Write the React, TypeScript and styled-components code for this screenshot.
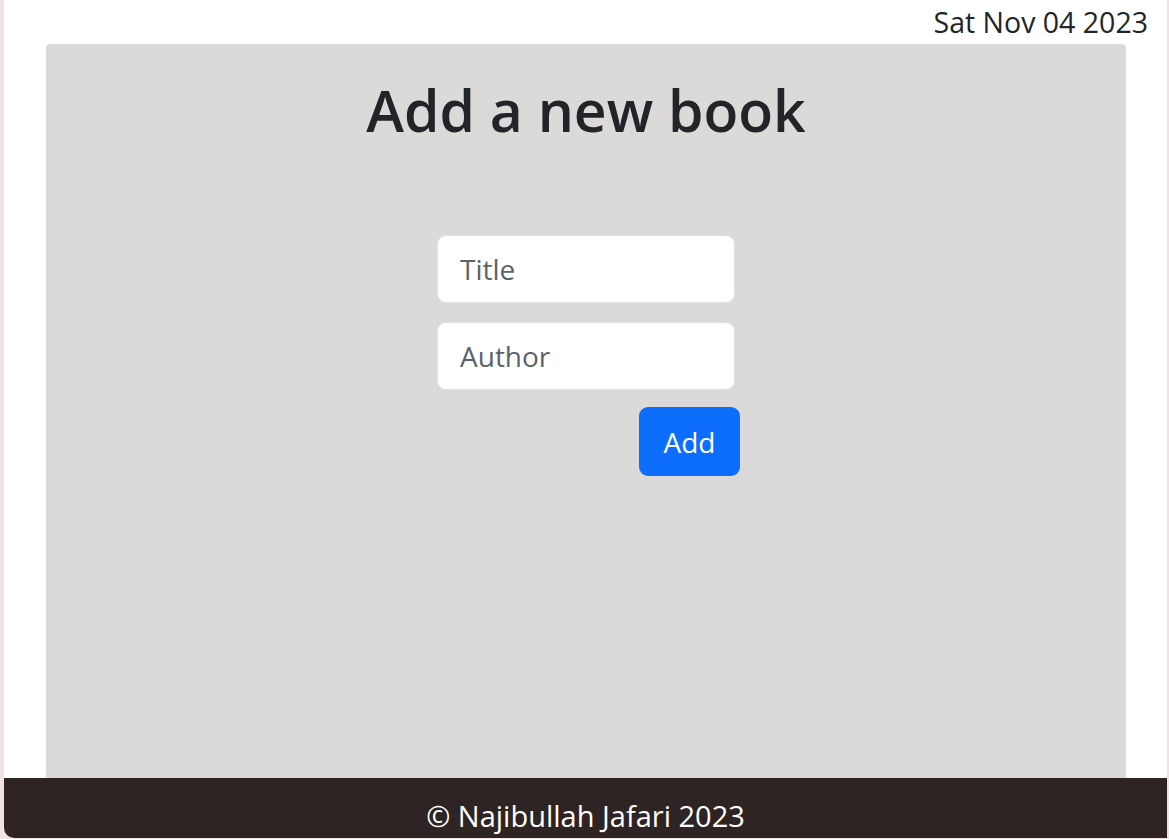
import React from "react";
import styled, { createGlobalStyle } from "styled-components";

const GlobalStyle = createGlobalStyle`
    html, body {
        margin: 0;
        padding: 0;
        background-color: #f3e2e2;
    }
    body {
        font-family: "Open Sans", "Noto Sans", sans-serif;
        color: #212529;
    }
`;

const Page = styled.div`
    margin-left: 4px;
    width: 1163px;
    height: 838px;
    display: flex;
    flex-direction: column;
    background-color: #ffffff;
    border-bottom-left-radius: 10px;
    overflow: hidden;
`;

const DateRow = styled.div`
    height: 44px;
    display: flex;
    justify-content: flex-end;
    align-items: flex-start;
    padding-right: 19px;
    font-size: 28.5px;
    line-height: 44px;
    box-sizing: border-box;
`;

const Panel = styled.main`
    flex: 1;
    margin: 0 41px 0 42px;
    background-color: #dbdad9;
    border-radius: 4px 4px 0 0;
    display: flex;
    flex-direction: column;
    align-items: center;
`;

const Heading = styled.h1`
    margin: 26px 0 0 0;
    font-size: 57px;
    font-weight: 600;
    line-height: 80px;
    color: #212529;
`;

const Form = styled.form`
    margin-top: 85px;
    width: 298px;
    display: flex;
    flex-direction: column;
    gap: 19px;
`;

const Input = styled.input`
    box-sizing: border-box;
    width: 100%;
    height: 68px;
    padding: 0 22px;
    border: 1px solid #dee2e6;
    border-radius: 9px;
    background-color: #ffffff;
    font-family: inherit;
    font-size: 28px;
    color: #212529;
    outline: none;

    &::placeholder {
        color: #5c636a;
    }
`;

const ButtonRow = styled.div`
    display: flex;
    justify-content: flex-end;
    margin-top: -2px;
    margin-right: -5px;
`;

const Button = styled.button`
    width: 101px;
    height: 69px;
    border: none;
    border-radius: 9px;
    background-color: #0d6efd;
    color: #ffffff;
    font-family: inherit;
    font-size: 28px;
    cursor: pointer;
`;

const Footer = styled.footer`
    height: 60px;
    background-color: #2e2423;
    color: #ffffff;
    display: flex;
    justify-content: center;
    align-items: flex-end;
    padding-bottom: 3px;
    box-sizing: border-box;
    font-size: 29px;
`;

export default function App() {
    return (
        <>
            <GlobalStyle />
            <Page>
                <DateRow>Sat Nov 04 2023</DateRow>
                <Panel>
                    <Heading>Add a new book</Heading>
                    <Form onSubmit={(e) => e.preventDefault()}>
                        <Input type="text" placeholder="Title" />
                        <Input type="text" placeholder="Author" />
                        <ButtonRow>
                            <Button type="submit">Add</Button>
                        </ButtonRow>
                    </Form>
                </Panel>
                <Footer>© Najibullah Jafari 2023</Footer>
            </Page>
        </>
    );
}
